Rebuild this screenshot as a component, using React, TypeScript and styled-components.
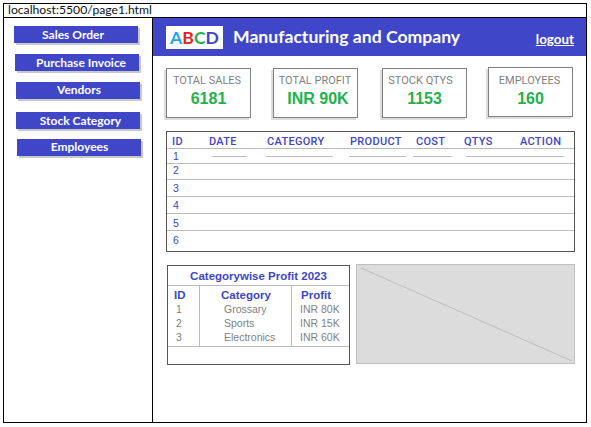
import React from "react";
import styled, { createGlobalStyle } from "styled-components";

const Global = createGlobalStyle`
  html, body { margin: 0; padding: 0; background: #fff; }
  body { font-family: "Liberation Sans", Arial, sans-serif; }
`;

const Frame = styled.div`
  box-sizing: border-box;
  margin: 3px 0 0 3px;
  width: 584px;
  height: 420px;
  border: 1px solid #000;
  display: flex;
  flex-direction: column;
`;
const AddressBar = styled.div`
  box-sizing: border-box;
  height: 14px;
  flex: none;
  border-bottom: 1px solid #000;
  padding-left: 4px;
  font: 12.2px/12px Lato, sans-serif;
  color: #111;
`;
const Body = styled.div`
  flex: 1;
  display: flex;
  min-height: 0;
`;
const Sidebar = styled.nav`
  box-sizing: border-box;
  width: 149px;
  flex: none;
  border-right: 1px solid #000;
  padding-top: 8px;
  display: flex;
  flex-direction: column;
`;
const NavButton = styled.div<{ $left: number; $top: number; $indent: number; $dy: number }>`
  box-sizing: border-box;
  width: 124px;
  height: 17px;
  margin: ${(p) => p.$top}px 0 0 ${(p) => p.$left}px;
  padding-top: ${(p) => p.$dy}px;
  background: #4046c8;
  box-shadow: 2px 2px 0 #c8c8c8;
  color: #fff;
  text-align: center;
  text-indent: ${(p) => p.$indent}px;
  font: 700 12px/15px Lato, sans-serif;
`;
const Main = styled.main`
  flex: 1;
  min-width: 0;
  display: flex;
  flex-direction: column;
`;
const Header = styled.header`
  box-sizing: border-box;
  height: 38px;
  flex: none;
  background: #4046c8;
  display: flex;
  align-items: flex-start;
  padding: 8px 12px 0 13px;
`;
const Logo = styled.div`
  width: 57px;
  height: 23px;
  background: #fff;
  display: flex;
  justify-content: center;
  font: 700 17.6px/24px Lato, sans-serif;
`;
const LogoLetter = styled.span<{ $color: string }>`
  color: ${(p) => p.$color};
`;
const Title = styled.h1`
  margin: 0 0 0 10px;
  flex: 1;
  color: #fff;
  font: 700 17.6px/21px Lato, sans-serif;
`;
const Logout = styled.a`
  margin-top: 5px;
  color: #fff;
  font: 700 13.4px/16px Lato, sans-serif;
  text-decoration: underline;
`;
const Stats = styled.section`
  display: flex;
  align-items: flex-start;
  padding: 12px 0 0 13px;
`;
const StatCard = styled.div<{ $gap: number; $raise?: boolean }>`
  box-sizing: border-box;
  width: 85px;
  height: 50px;
  margin-left: ${(p) => p.$gap}px;
  margin-top: ${(p) => (p.$raise ? -1 : 0)}px;
  border: 1px solid #808080;
  background: #fff;
  box-shadow: -2px 2px 0 #dcdcdc;
  text-align: center;
  padding-top: ${(p) => (p.$raise ? 6 : 5)}px;
`;
const StatLabel = styled.div<{ $indent: number }>`
  font-family: Roboto, sans-serif;
  font-size: 11px;
  line-height: 13px;
  color: #7f7f7f;
  text-indent: ${(p) => p.$indent}px;
`;
const StatValue = styled.div<{ $indent: number }>`
  margin-top: 3px;
  font-size: 16px;
  font-weight: 700;
  line-height: 18px;
  color: #22b14c;
  text-indent: ${(p) => p.$indent}px;
`;
const OrdersTable = styled.section`
  box-sizing: border-box;
  width: 409px;
  height: 121px;
  margin: 13px 0 0 13px;
  border: 1px solid #555;
`;
const HeadRow = styled.div`
  box-sizing: border-box;
  height: 17px;
  border-bottom: 1px solid #bbb;
  display: grid;
  grid-template-columns: 37px 58px 83px 66px 48px 56px 1fr;
  padding: 2px 0 0 5px;
  font-family: Roboto, sans-serif;
  font-size: 11px;
  font-weight: 500;
  line-height: 15px;
  color: #4046c8;
  letter-spacing: 0.3px;
`;
const Row = styled.div<{ $height: number; $last?: boolean }>`
  box-sizing: border-box;
  height: ${(p) => p.$height}px;
  border-bottom: ${(p) => (p.$last ? "none" : "1px solid #bbb")};
  display: flex;
  padding-left: 6px;
  font-size: 10.5px;
  line-height: 14px;
  color: #4046c8;
`;
const RowId = styled.span<{ $shift: number }>`
  width: 39px;
  flex: none;
  margin-top: ${(p) => p.$shift}px;
`;
const Blank = styled.span<{ $w: number; $gap: number }>`
  width: ${(p) => p.$w}px;
  margin: 7px 0 0 ${(p) => p.$gap}px;
  height: 1px;
  background: #bbb;
  flex: none;
`;
const Lower = styled.section`
  display: flex;
  align-items: flex-start;
  padding: 12px 0 0 14px;
`;
const ProfitCard = styled.div`
  box-sizing: border-box;
  width: 183px;
  height: 100px;
  margin-top: 1px;
  border: 1px solid #555;
  display: flex;
  flex-direction: column;
`;
const ProfitTitle = styled.div`
  box-sizing: border-box;
  height: 20px;
  border-bottom: 1px solid #bbb;
  text-align: center;
  font-size: 11.5px;
  font-weight: 700;
  line-height: 20px;
  color: #4046c8;
`;
const ProfitGrid = styled.div`
  box-sizing: border-box;
  height: 61px;
  border-bottom: 1px solid #bbb;
  display: grid;
  grid-template-columns: 32px 92px 1fr;
`;
const ProfitCol = styled.div<{ $pad: number; $divider?: boolean }>`
  box-sizing: border-box;
  padding: 3px 0 0 ${(p) => p.$pad}px;
  border-right: ${(p) => (p.$divider ? "1px solid #bbb" : "none")};
  font-size: 10.5px;
  line-height: 14px;
  color: #7f7f7f;
`;
const ProfitHead = styled.div<{ $shift?: number }>`
  margin-left: ${(p) => p.$shift ?? 0}px;
  font-size: 11.5px;
  line-height: 13px;
  font-weight: 700;
  color: #4046c8;
`;
const ChartPlaceholder = styled.svg`
  display: block;
  width: 219px;
  height: 100px;
  margin-left: 6px;
`;

const stats = [
  { label: "TOTAL SALES", value: "6181", gap: 0, labelIndent: -3, valueIndent: 0 },
  { label: "TOTAL PROFIT", value: "INR 90K", gap: 22, labelIndent: -1, valueIndent: 5 },
  { label: "STOCK QTYS", value: "1153", gap: 24, labelIndent: -8, valueIndent: 0 },
  { label: "EMPLOYEES", value: "160", gap: 21, raise: true, labelIndent: -2, valueIndent: 0 },
];
const nav = [
  { label: "Sales Order", left: 10, top: 0, indent: -6, dy: 1 },
  { label: "Purchase Invoice", left: 11, top: 11, indent: 8, dy: 1 },
  { label: "Vendors", left: 12, top: 11, indent: 2, dy: 0 },
  { label: "Stock Category", left: 12, top: 13, indent: 5, dy: 1 },
  { label: "Employees", left: 13, top: 10, indent: 1, dy: 0 },
];
const heads = ["ID", "DATE", "CATEGORY", "PRODUCT", "COST", "QTYS", "ACTION"];
const rows = [
  { height: 15, shift: 0 },
  { height: 16, shift: -1 },
  { height: 17, shift: 1 },
  { height: 17, shift: 1 },
  { height: 17, shift: 2 },
  { height: 21, shift: 2 },
];
const blanks = [
  { w: 35, gap: 0 },
  { w: 67, gap: 19 },
  { w: 57, gap: 16 },
  { w: 39, gap: 7 },
  { w: 98, gap: 14 },
];

export default function App() {
  return (
    <>
      <Global />
      <Frame>
        <AddressBar>localhost:5500/page1.html</AddressBar>
        <Body>
          <Sidebar>
            {nav.map((n) => (
              <NavButton key={n.label} $left={n.left} $top={n.top} $indent={n.indent} $dy={n.dy}>
                {n.label}
              </NavButton>
            ))}
          </Sidebar>
          <Main>
            <Header>
              <Logo>
                <LogoLetter $color="#1ea7e8">A</LogoLetter>
                <LogoLetter $color="#ed1c24">B</LogoLetter>
                <LogoLetter $color="#22b14c">C</LogoLetter>
                <LogoLetter $color="#4046c8">D</LogoLetter>
              </Logo>
              <Title>Manufacturing and Company</Title>
              <Logout>logout</Logout>
            </Header>
            <Stats>
              {stats.map((s) => (
                <StatCard key={s.label} $gap={s.gap} $raise={s.raise}>
                  <StatLabel $indent={s.labelIndent}>{s.label}</StatLabel>
                  <StatValue $indent={s.valueIndent}>{s.value}</StatValue>
                </StatCard>
              ))}
            </Stats>
            <OrdersTable>
              <HeadRow>
                {heads.map((h) => (
                  <div key={h}>{h}</div>
                ))}
              </HeadRow>
              {rows.map((r, i) => (
                <Row key={i} $height={r.height} $last={i === rows.length - 1}>
                  <RowId $shift={r.shift}>{i + 1}</RowId>
                  {i === 0 && blanks.map((b, j) => <Blank key={j} $w={b.w} $gap={b.gap} />)}
                </Row>
              ))}
            </OrdersTable>
            <Lower>
              <ProfitCard>
                <ProfitTitle>Categorywise Profit 2023</ProfitTitle>
                <ProfitGrid>
                  <ProfitCol $pad={8} $divider>
                    <ProfitHead $shift={-2}>ID</ProfitHead>
                    <div>1</div>
                    <div>2</div>
                    <div>3</div>
                  </ProfitCol>
                  <ProfitCol $pad={24} $divider>
                    <ProfitHead $shift={-3}>Category</ProfitHead>
                    <div>Grossary</div>
                    <div>Sports</div>
                    <div>Electronics</div>
                  </ProfitCol>
                  <ProfitCol $pad={8}>
                    <ProfitHead $shift={1}>Profit</ProfitHead>
                    <div>INR 80K</div>
                    <div>INR 15K</div>
                    <div>INR 60K</div>
                  </ProfitCol>
                </ProfitGrid>
              </ProfitCard>
              <ChartPlaceholder viewBox="0 0 219 100">
                <rect x="0.5" y="0.5" width="218" height="99" fill="#dcdcdc" stroke="#c0c0c0" />
                <line x1="5" y1="4" x2="216" y2="97" stroke="#bdbdbd" />
              </ChartPlaceholder>
            </Lower>
          </Main>
        </Body>
      </Frame>
    </>
  );
}
